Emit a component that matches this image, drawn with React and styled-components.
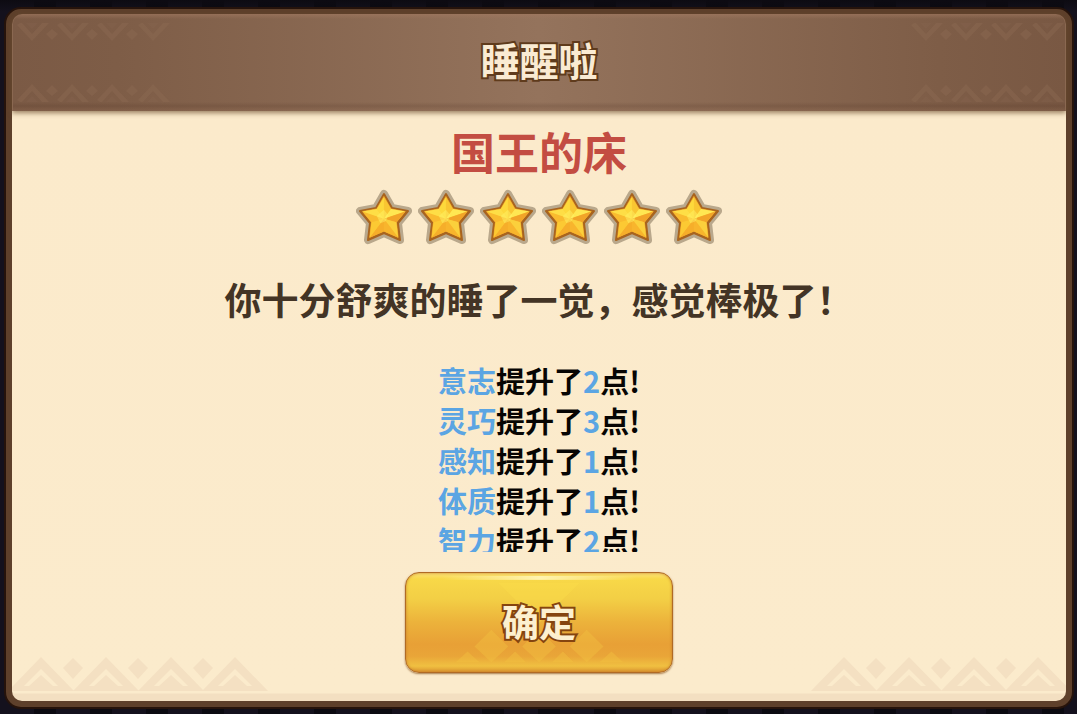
import React from "react";
import styled, { createGlobalStyle } from "styled-components";

const GlobalStyle = createGlobalStyle`
  *, *::before, *::after { box-sizing: border-box; }
  body {
    margin: 0;
    background: #09080d;
    font-family: "Noto Sans CJK SC", "Noto Sans", sans-serif;
    font-weight: 700;
  }
`;

const Backdrop = styled.main`
  display: flex;
  min-height: 100vh;
  padding: 9px 5px 7px 6px;
  background:
    linear-gradient(180deg, #0d0b12 0, rgba(13, 11, 18, 0) 12px),
    repeating-linear-gradient(90deg, #14111d 0 34px, #0b0a11 34px 56px);
  background-color: #09080d;
`;

const Dialog = styled.section`
  flex: 1;
  display: flex;
  flex-direction: column;
  border: 6px solid #5e402b;
  border-top-width: 5px;
  border-radius: 15px;
  background: #5e402b;
  box-shadow: 0 0 0 2px #26130b;
`;

const Header = styled.header`
  position: relative;
  z-index: 1;
  display: flex;
  align-items: center;
  justify-content: center;
  height: 97px;
  padding-bottom: 8px;
  border-radius: 10px 10px 0 0;
  background:
    linear-gradient(180deg, rgba(160, 120, 96, 0.6) 0, rgba(160, 120, 96, 0) 5px, rgba(0, 0, 0, 0) 88px, rgba(80, 50, 35, 0.2) 92px, rgba(150, 110, 85, 0.2) 97px),
    linear-gradient(90deg, #7b5a45 0%, #7e5d47 10%, #94735c 50%, #7e5d47 88%, #795843 100%);
  box-shadow: 0 2px 5px rgba(110, 80, 50, 0.7), inset 1px 0 0 #8a6851, inset -1px 0 0 #8a6851;
`;

const HeaderTitle = styled.h1`
  margin: 0;
  font-size: 39px;
  line-height: 56px;
  font-weight: 700;
  color: #faebd3;
  paint-order: stroke fill;
  -webkit-text-stroke: 4px #5f3b1c;
`;

const Content = styled.div`
  position: relative;
  flex: 1;
  display: flex;
  flex-direction: column;
  align-items: center;
  padding: 10px 24px 28px;
  overflow: hidden;
  border-radius: 0 0 10px 10px;
  background: linear-gradient(0deg, #f3dfc1 0, #f3dfc1 7px, #fbebcc 8px, #fbeacb 100%);
`;

const ItemName = styled.h2`
  margin: 0;
  font-size: 44px;
  line-height: 60px;
  font-weight: 700;
  color: #c34d42;
`;

const Stars = styled.div`
  display: flex;
  gap: 6px;
  margin-top: 8px;

  svg { display: block; width: 56px; height: 57px; }
`;

const Message = styled.p`
  margin: 28px 0 0;
  font-size: 37px;
  line-height: 50px;
  color: #433425;
`;

const StatList = styled.ul`
  height: 192px;
  margin: 36px 0 0;
  padding: 0;
  overflow: hidden;
  list-style: none;
`;

const StatRow = styled.li`
  font-size: 29px;
  line-height: 40px;
  height: 40px;
  color: #070503;
`;

const Accent = styled.span`
  color: #5ba5e3;
`;

const ConfirmButton = styled.button`
  position: relative;
  width: 268px;
  height: 101px;
  margin: 20px 0 0;
  padding: 0;
  overflow: hidden;
  border: 1px solid #b06a25;
  border-radius: 14px;
  background: linear-gradient(180deg, #fbe27a 0, #f8d848 6px, #f3cf45 26%, #ecb23b 50%, #e8a036 72%, #e9a538 84%, #f0c041 94%, #dc9530 100%);
  box-shadow: 0 1px 2px #a77c4b, inset 0 0 3px #c47e2a;
  font-family: inherit;
  cursor: pointer;
`;

const ButtonLabel = styled.span`
  position: relative;
  display: block;
  padding-bottom: 4px;
  font-size: 37px;
  line-height: 90px;
  font-weight: 700;
  color: #fdf0cf;
  paint-order: stroke fill;
  -webkit-text-stroke: 4px #85440f;
`;

const ButtonArt = styled.svg`
  position: absolute;
  inset: 0;
  width: 100%;
  height: 100%;
`;

const Ornament = styled.svg`
  position: absolute;
  width: ${(p) => p.$width}px;
  height: ${(p) => p.$height}px;
  ${(p) => p.$side}: ${(p) => p.$inset}px;
  ${(p) => p.$edge}: ${(p) => p.$edgeGap}px;
  transform: ${(p) => (p.$flip ? "scaleY(-1)" : "none")};
`;

function HeaderOrnament({ side, edge }) {
  const peaks = [20, 60, 100, 141];
  return (
    <Ornament
      $width={161}
      $height={19}
      $side={side}
      $inset={side === "left" ? 0 : -1}
      $edge={edge}
      $edgeGap={8}
      $flip={edge === "top"}
      viewBox="0 0 161 19"
      fill="#8d6b55"
      fillOpacity="0.38"
      aria-hidden="true"
    >
      {peaks.map((x) => (
        <g key={x}>
          <path d={`M${x} 0L${x + 17} 18H${x + 10}L${x} 7L${x - 10} 18H${x - 12}L${x - 15} 16Z`} />
          <path d={`M${x} 12L${x + 6} 18H${x - 6}Z`} fillOpacity="0.2" />
        </g>
      ))}
      {peaks.slice(0, 3).map((x) => (
        <path key={x} d={`M${x + 20} 1L${x + 26} 7L${x + 20} 12L${x + 14} 7Z`} />
      ))}
    </Ornament>
  );
}

function FooterOrnament({ side }) {
  const peaks = [33, 98, 163, 227];
  return (
    <Ornament
      $width={261}
      $height={34}
      $side={side}
      $inset={side === "left" ? -4 : -6}
      $edge="bottom"
      $edgeGap={10}
      viewBox="0 0 261 34"
      fill="#f4e0c2"
      aria-hidden="true"
    >
      {peaks.map((x) => (
        <path
          key={x}
          fillRule="evenodd"
          d={`M${x} 0L${x + 33} 34H${x - 33}ZM${x} 12L${x + 17} 29H${x + 12}L${x} 18L${x - 12} 29H${x - 17}Z`}
        />
      ))}
      {peaks.slice(0, 3).map((x) => (
        <path key={x} d={`M${x + 32} 1L${x + 42} 11L${x + 32} 22L${x + 22} 11Z`} />
      ))}
    </Ornament>
  );
}

const STAR = "M28 5L36 19L52 22L42 34L44 51L28 44L12 51L14 34L4 22L20 19Z";

function Star() {
  return (
    <svg viewBox="0 0 56 57" aria-hidden="true">
      <path d={STAR} fill="#b9a88c" stroke="#b9a88c" strokeWidth="8" strokeLinejoin="round" />
      <path d={STAR} fill="#a8641f" stroke="#a8641f" strokeWidth="2" strokeLinejoin="round" />
      <g transform="translate(3 3) scale(.89)">
        <path d={STAR} fill="#fac733" stroke="#f0a528" strokeWidth="1" strokeLinejoin="round" />
        <path d="M28 6L20 19L28 30Z" fill="#fdd93c" />
        <path d="M28 6L36 19L28 30Z" fill="#f9c632" />
        <path d="M36 19L52 22L28 30Z" fill="#ffe752" />
        <path d="M52 22L42 34L28 30Z" fill="#f2a428" />
        <path d="M42 34L44 51L28 30Z" fill="#fbd03c" />
        <path d="M44 51L28 44L28 30Z" fill="#f8b52d" />
        <path d="M28 44L12 51L28 30Z" fill="#f6ae2a" />
        <path d="M12 51L14 34L28 30Z" fill="#fcc933" />
        <path d="M14 34L4 22L28 30Z" fill="#f9bb2f" />
        <path d="M4 22L20 19L28 30Z" fill="#fede46" />
        <path d="M28 20L33 26L30 33L24 35L20 27Z" fill="#fff36a" fillOpacity="0.45" />
      </g>
    </svg>
  );
}

const STATS = [
  ["意志", 2],
  ["灵巧", 3],
  ["感知", 1],
  ["体质", 1],
  ["智力", 2],
];

export default function App() {
  return (
    <>
      <GlobalStyle />
      <Backdrop>
        <Dialog role="dialog" aria-labelledby="dialog-title">
          <Header>
            <HeaderOrnament side="left" edge="top" />
            <HeaderOrnament side="left" edge="bottom" />
            <HeaderOrnament side="right" edge="top" />
            <HeaderOrnament side="right" edge="bottom" />
            <HeaderTitle id="dialog-title">睡醒啦</HeaderTitle>
          </Header>
          <Content>
            <FooterOrnament side="left" />
            <FooterOrnament side="right" />
            <ItemName>国王的床</ItemName>
            <Stars role="img" aria-label="6">
              {[1, 2, 3, 4, 5, 6].map((n) => (
                <Star key={n} />
              ))}
            </Stars>
            <Message>你十分舒爽的睡了一觉，感觉棒极了！</Message>
            <StatList>
              {STATS.map(([name, points]) => (
                <StatRow key={name}>
                  <Accent>{name}</Accent>提升了<Accent>{points}</Accent>点!
                </StatRow>
              ))}
            </StatList>
            <ConfirmButton type="button">
              <ButtonArt viewBox="0 0 268 101" preserveAspectRatio="none" aria-hidden="true">
                <defs>
                  <linearGradient id="shine" x1="0" x2="1">
                    <stop offset="0" stopColor="#fff3b0" stopOpacity="0" />
                    <stop offset="0.5" stopColor="#fff3b0" />
                    <stop offset="1" stopColor="#fff3b0" stopOpacity="0" />
                  </linearGradient>
                </defs>
                <rect x="36" y="3" width="196" height="4" fill="url(#shine)" />
                <path d="M93 10H175L134 51Z" fill="#fbe04a" fillOpacity="0.35" />
                <g fill="#f3c242" fillOpacity="0.4">
                  <path d="M86 58L103 75L86 91L69 75Z" />
                  <path d="M134 58L151 75L134 91L117 75Z" />
                  <path d="M182 58L199 75L182 91L165 75Z" />
                  <path d="M62 80L74 91H50Z" />
                  <path d="M110 80L121 91H99Z" />
                  <path d="M158 80L169 91H147Z" />
                  <path d="M207 80L219 91H195Z" />
                </g>
              </ButtonArt>
              <ButtonLabel>确定</ButtonLabel>
            </ConfirmButton>
          </Content>
        </Dialog>
      </Backdrop>
    </>
  );
}
